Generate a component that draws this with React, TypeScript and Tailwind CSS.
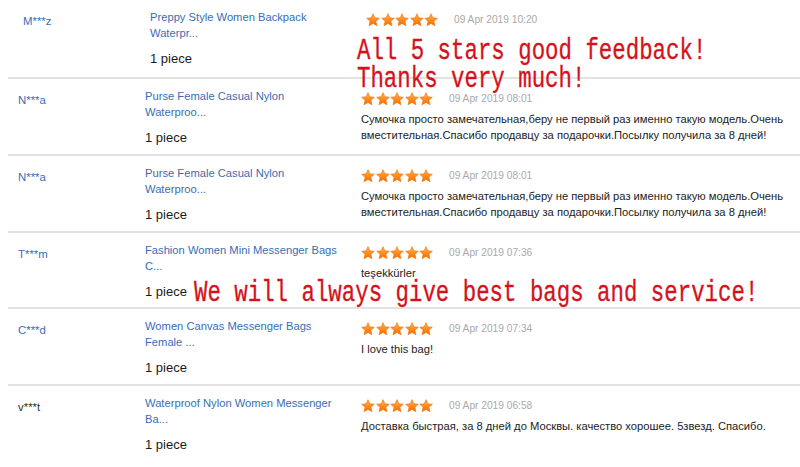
import React from "react";

type Row = {
  name: string;
  nameDark?: boolean;
  product: [string, string];
  date: string;
  text: string[];
  shift?: boolean;
  h: string;
};

const rows: Row[] = [
  { name: "M***z", product: ["Preppy Style Women Backpack", "Waterpr..."], date: "09 Apr 2019 10:20", text: [], shift: true, h: "h-[77px]" },
  {
    name: "N***a",
    product: ["Purse Female Casual Nylon", "Waterproo..."],
    date: "09 Apr 2019 08:01",
    text: [
      "Сумочка просто замечательная,беру не первый раз именно такую модель.Очень",
      "вместительная.Спасибо продавцу за подарочки.Посылку получила за 8 дней!",
    ],
    h: "h-[75px]",
  },
  {
    name: "N***a",
    product: ["Purse Female Casual Nylon", "Waterproo..."],
    date: "09 Apr 2019 08:01",
    text: [
      "Сумочка просто замечательная,беру не первый раз именно такую модель.Очень",
      "вместительная.Спасибо продавцу за подарочки.Посылку получила за 8 дней!",
    ],
    h: "h-[75px]",
  },
  { name: "T***m", product: ["Fashion Women Mini Messenger Bags", "C..."], date: "09 Apr 2019 07:36", text: ["teşekkürler"], h: "h-[74px]" },
  { name: "C***d", product: ["Women Canvas Messenger Bags", "Female ..."], date: "09 Apr 2019 07:34", text: ["I love this bag!"], h: "h-[75px]" },
  {
    name: "v***t",
    nameDark: true,
    product: ["Waterproof Nylon Women Messenger", "Ba..."],
    date: "09 Apr 2019 06:58",
    text: ["Доставка быстрая, за 8 дней до Москвы. качество хорошее. 5звезд. Спасибо."],
    h: "h-[81px]",
  },
];

function Star({ id }: { id: string }) {
  return (
    <svg width="14" height="14" viewBox="0 0 24 24">
      <defs>
        <linearGradient id={id} x1="0" y1="0" x2="0" y2="1">
          <stop offset="0" stopColor="#ffb65c" />
          <stop offset="0.55" stopColor="#ff8a1e" />
          <stop offset="1" stopColor="#f06a00" />
        </linearGradient>
      </defs>
      <polygon
        points="12,1.2 15.1,8.3 22.8,9 17,14.2 18.7,21.8 12,17.8 5.3,21.8 7,14.2 1.2,9 8.9,8.3"
        fill={`url(#${id})`}
        stroke="#ee7a10"
        strokeWidth="1.2"
        strokeLinejoin="round"
      />
    </svg>
  );
}

function Stars({ k }: { k: number }) {
  return (
    <div className="flex gap-[0.5px]">
      {[0, 1, 2, 3, 4].map((i) => (
        <Star key={i} id={`g${k}-${i}`} />
      ))}
    </div>
  );
}

export default function App() {
  return (
    <div
      className="relative w-[800px] h-[467px] overflow-hidden bg-white"
      style={{ fontFamily: '"Liberation Sans", Arial, sans-serif' }}
    >
      <div className="flex flex-col">
        {rows.map((r, i) => (
          <React.Fragment key={i}>
            {i > 0 && <div className="ml-[8px] h-[2px] bg-[#e2e2e2]" />}
            <div className={`flex ${r.h} ${r.shift ? "pl-[23px]" : "pl-[18px]"}`}>
              <div className={`w-[127px] shrink-0 pt-[13px] text-[11.4px] leading-[16px] ${r.nameDark ? "text-[#333333]" : "text-[#3a6db5]"}`}>
                {r.name}
              </div>
              <div className="w-[216px] shrink-0 pt-[9px]">
                <div className="text-[11.2px] leading-[16px] text-[#3a6db5]">
                  <div>{r.product[0]}</div>
                  <div>{r.product[1]}</div>
                </div>
                <div className="mt-[10px] text-[13px] leading-[16px] text-[#1a1a1a]">1 piece</div>
              </div>
              <div className="flex-1 min-w-0 pt-[13px]">
                <div className="flex items-center">
                  <Stars k={i} />
                  <span className="ml-[16px] text-[10.2px] leading-[14px] text-[#a9a9a9]">{r.date}</span>
                </div>
                <div className="mt-[5px] text-[11.2px] leading-[16px] text-[#222222] whitespace-nowrap">
                  {r.text.map((t, j) => (
                    <div key={j}>{t}</div>
                  ))}
                </div>
              </div>
            </div>
          </React.Fragment>
        ))}
      </div>

      <div
        className="absolute left-[357px] top-[38px] origin-top-left scale-y-[1.33] text-[22.4px] leading-[21px] text-[#d4121c] whitespace-nowrap [-webkit-text-stroke:0.25px_#d4121c]"
        style={{ fontFamily: '"Liberation Mono", "Courier New", monospace' }}
      >
        <div>All 5 stars good feedback!</div>
        <div>Thanks very much!</div>
      </div>
      <div
        className="absolute left-[194px] top-[280px] origin-top-left scale-y-[1.33] text-[22.4px] leading-[21px] text-[#d4121c] whitespace-nowrap [-webkit-text-stroke:0.25px_#d4121c]"
        style={{ fontFamily: '"Liberation Mono", "Courier New", monospace' }}
      >
        We will always give best bags and service!
      </div>
    </div>
  );
}
